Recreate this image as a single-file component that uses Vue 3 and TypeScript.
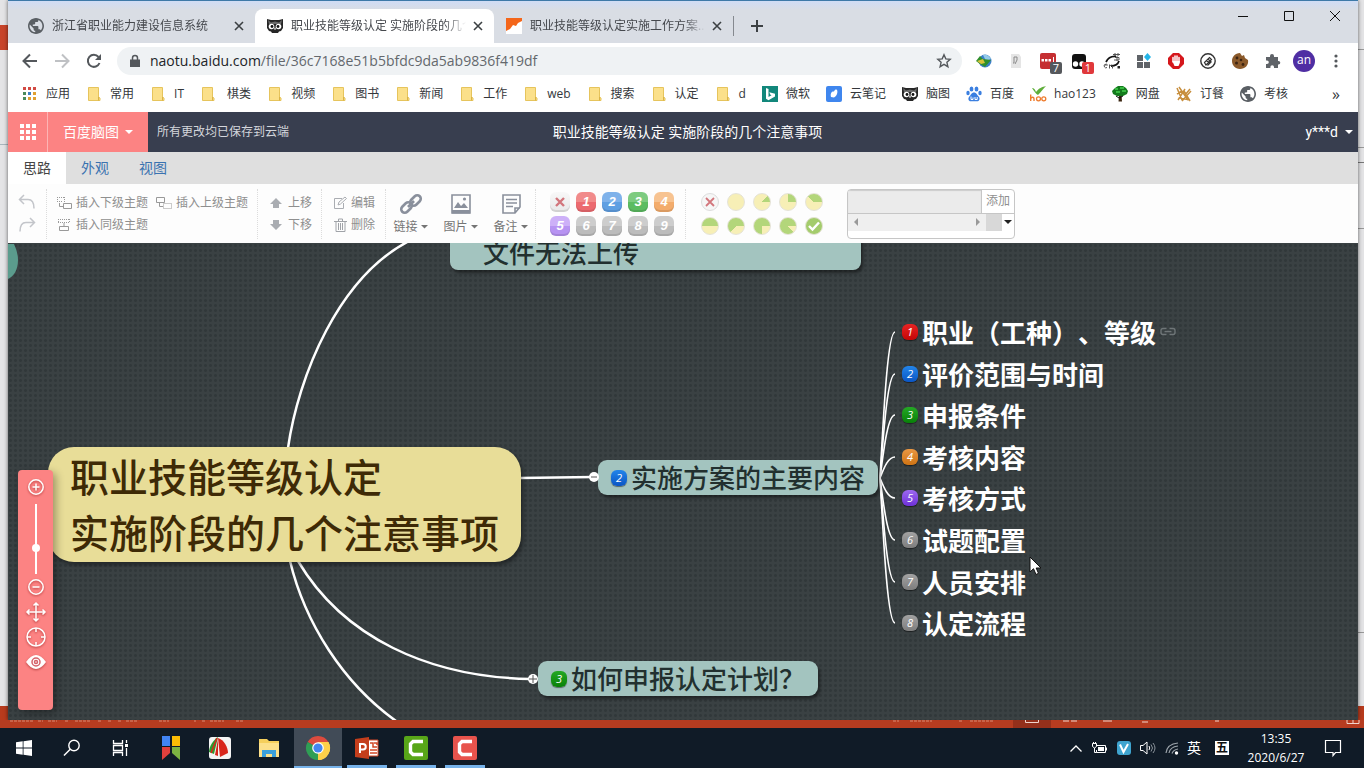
<script setup lang="ts">
import { ref } from 'vue'

interface Tab { title: string; icon: string; active?: boolean }
interface Bookmark { label: string; icon: string }
interface Leaf { n: number; text: string; y: number }

const icons: Record<string, string> = {
  globe: '<path transform="translate(-1.600 -1.600) scale(.8)" d="M12 2C6.480 2 2 6.480 2 12s4.480 10 10 10 10-4.480 10-10S17.520 2 12 2zm-1 17.930c-3.950-.49-7-3.850-7-7.930 0-.62.08-1.210.21-1.790L9 15v1c0 1.100.9 2 2 2v1.930zm6.900-2.540c-.26-.81-1-1.390-1.900-1.390h-1v-3c0-.55-.45-1-1-1H8v-2h2c.55 0 1-.45 1-1V7h2c1.100 0 2-.9 2-2v-.41c2.930 1.190 5 4.060 5 7.410 0 2.080-.8 3.970-2.100 5.390z" fill="#5a5f64"/>',
  owl: '<path d="M0 1l4 1h8l4-1v9l-2 3-2 .5-1 1.500H5L4 13.500 2 13 0 10z" fill="#262626"/><path d="M1 2l3 2.500L8 3.500l4 1L15 2l-1 4H2z" fill="#6a6a6a"/><circle cx="4.500" cy="8.500" r="2.800" fill="#fff"/><circle cx="11.500" cy="8.500" r="2.800" fill="#fff"/><circle cx="5" cy="8.500" r="1.400" fill="#111"/><circle cx="11" cy="8.500" r="1.400" fill="#111"/><path d="M8 9l1 2-1 1-1-1z" fill="#ddd"/>',
  orange: '<path d="M0 0h16v16H0z" fill="#fff"/><path d="M0 0h16v3l-4 2-2 3-3-1-3 4-4 2z" fill="#f4661a"/>',
  apps: '<path fill="#d24a43" d="M1 1h3v3H1zM6 1h3v3H6zM11 1h3v3h-3z"/><path fill="#4b8a5c" d="M1 6h3v3H1z"/><path fill="#3e7fc4" d="M6 6h3v3H6z"/><path fill="#e0a030" d="M11 6h3v3h-3zM6 11h3v3H6zM11 11h3v3h-3z"/><path fill="#4b8a5c" d="M1 11h3v3H1z"/>',
  folder: '<path d="M2.500 1.500h10v9.500l1.500 1v2.500H2.500z" fill="#fbe08a" stroke="#e6c45c"/><path d="M12.500 11v3.500" stroke="#d9b347"/>',
  bing: '<path fill="#12877b" d="M0 0h16v16H0z"/><path d="M4 2l2.500 1v8l3-1.800-1.300-.7-.9-2.200L13 7.700v2.800l-6.500 3.700L4 12.700z" fill="#fff"/>',
  note: '<rect width="16" height="16" rx="2" fill="#3f86ee"/><path d="M5 11c-1-4 1-6 3-5.500C9 3.500 10 3 11 4c1 2 0 6-3 7.500z" fill="#fff"/>',
  paw: '<g fill="#3b7fe0"><ellipse cx="5.500" cy="3" rx="1.900" ry="2.600"/><ellipse cx="10.500" cy="3" rx="1.900" ry="2.600"/><ellipse cx="2" cy="7" rx="1.700" ry="2.300"/><ellipse cx="14" cy="7" rx="1.700" ry="2.300"/><path d="M8 6.500c2.500 0 3 2.500 4.700 4 1.600 1.500 1 4.800-1.500 4.800H4.800c-2.500 0-3.100-3.300-1.500-4.800C5 9 5.500 6.500 8 6.500z"/></g><path d="M5 10.500v3h2v-2M9 11v2.500h2.200V11" fill="none" stroke="#fff"/>',
  hao: '<path d="M2 2c2 0 3 1.500 4 4C9 2 12 1 16 0c-3 3-5 6-8 9C6 8 4 5 2 2z" fill="#5fae3a"/><path d="M.7 8.500V15M.7 12.500C2 10.500 4 11 4 13v2" fill="none" stroke="#ee7b2c" stroke-width="1.400"/><g fill="none" stroke="#ee7b2c" stroke-width="1.300"><circle cx="8.500" cy="12.800" r="2"/><circle cx="13.800" cy="12.800" r="2"/></g>',
  tree: '<path d="M7 8h2.500l.5 7.500H6.500z" fill="#3a2510"/><path d="M3 2l3-2h5l3 2 2 3-1 3-4 2H5L1 8 0 5z" fill="#137a1c"/><path d="M3 3h3M8 2h4M4 6h4M10 5h4" stroke="#44d04c" stroke-width="1.500"/><path d="M4 10l3 2 4-2" stroke="#111" fill="none"/>',
  meal: '<path d="M1 2l5 12M3 1l9 13M8 5l6 10M2 14L9 3M6 15L15 5M1 8l5-3M9 9l5-6M4 12l10 2" stroke="#c78e3d" stroke-width="1.500"/>',
  idm: '<circle cx="9" cy="8" r="6.500" fill="#3c7fc6"/><path d="M7 2c3-1 6 0 8 4l-5 2z" fill="#95cbe9"/><path d="M0 8l4-5 3 3 8 1-6 7-5-3z" fill="#2f8f2c"/><path d="M1 8l4 3 4-1-2-4z" fill="#d8c23a"/>',
  script: '<path d="M3 1h8l2 3v11H3z" fill="#e5e5e5"/><path d="M9 4H6v6H5M9 4v3l-2 4" stroke="#888" fill="none"/>',
  dots: '<rect width="16" height="16" rx="2" fill="#c52f32"/><path d="M1.500 6h2.500v2.500H1.500zM5 6h2.500v2.500H5zM8.500 6H11v2.500H8.500zM13 4h1v6h-1z" fill="#fff"/>',
  tamper: '<rect width="14" height="15" rx="3" y="1" fill="#111"/><circle cx="3.500" cy="11" r="2.700" fill="#fff"/><circle cx="10" cy="11" r="2.700" fill="#fff"/>',
  trans: '<path d="M2 9C4 5 8 3 12 3.500M15 8c-1 3-4 5-8 5" fill="none" stroke="#111" stroke-width="1.800"/><path d="M9 1.500h7M11 0v3M14 0v3M11 4.500h4v2.500h-5M13 3v5M0 12h3.500a1.800 1.800 0 1 0-.5 2.500M5.500 15.500V11.500M5.500 13q2-2 3 0v2.500" stroke="#555" fill="none"/><path d="M13.500 13h2.500v2.500h-2.500z" fill="#222"/>',
  squares: '<path fill="#5f6368" d="M1 2h6v6H1zM1 9h6v6H1zM8 9h6v6H8z"/><path fill="#24b5e8" d="M11.500 0l3.500 4-3.500 4L8 4z"/>',
  adblock: '<path d="M5 0h6l5 5v6l-5 5H5l-5-5V5z" fill="#d5171c"/><path d="M5 9V4.500M7 8V3M9 8V3M11 9V4.500" stroke="#fff" stroke-width="1.500" stroke-linecap="round"/><path d="M4.300 8h7.500v2L10.500 13h-4z" fill="#fff"/>',
  slash: '<circle cx="8" cy="8" r="7.200" fill="#fff" stroke="#333" stroke-width="1.400"/><path d="M4.500 9.500l5-5 2 2-5.500 5.500zM6.500 7.500l3 3M8 6l3 3M9 11l2.500-2.500M7.500 12.500l4-4" stroke="#333" stroke-width="1.200" fill="none"/>',
  cookie: '<path d="M8 0l2 3 2-1 1 3 3 2c1 5-3 9-8 9S0 12 0 8s3-8 8-8z" fill="#8b5a2b"/><g fill="#3d2412"><circle cx="5" cy="5" r="1.400"/><circle cx="9" cy="7" r="1.300"/><circle cx="4.500" cy="10" r="1.500"/><circle cx="11" cy="11.500" r="1.400"/></g>',
  puzzle: '<path d="M2 4h4V3a2 2 0 0 1 4 0v1h4v4h.5a1.800 1.800 0 0 1 0 3.600H14V15h-4v-1a1.800 1.800 0 0 0-3.600 0v1H2v-4h1a1.800 1.800 0 0 0 0-3.600H2z" fill="#5f6368"/>',
}

const tabs: Tab[] = [
  { title: '浙江省职业能力建设信息系统', icon: 'globe' },
  { title: '职业技能等级认定 实施阶段的几个注意事项', icon: 'owl', active: true },
  { title: '职业技能等级认定实施工作方案...', icon: 'orange' },
]

const bookmarks: Bookmark[] = [
  { label: '应用', icon: 'apps' },
  ...['常用', 'IT', '\u00a0棋类', '视频', '图书', '新闻', '工作', 'web', '搜索', '认定', 'd'].map((label) => ({ label, icon: 'folder' })),
  { label: '微软', icon: 'bing' },
  { label: '云笔记', icon: 'note' },
  { label: '脑图', icon: 'owl' },
  { label: '百度', icon: 'paw' },
  { label: 'hao123', icon: 'hao' },
  { label: '网盘', icon: 'tree' },
  { label: '订餐', icon: 'meal' },
  { label: '考核', icon: 'globe' },
]

const extensions: { icon: string; count?: number }[] = [
  { icon: 'idm' }, { icon: 'script' }, { icon: 'dots', count: 7 }, { icon: 'tamper', count: 1 }, { icon: 'trans' },
  { icon: 'squares' }, { icon: 'adblock' }, { icon: 'slash' }, { icon: 'cookie' }, { icon: 'puzzle' },
]

const priorities = [1, 2, 3, 4, 5, 6, 7, 8, 9]
const progress = [0, 1, 2, 3, 4, 5, 6, 7]
const pie = (k: number) => ({
  background: `conic-gradient(from ${90 - 45 * k}deg, #b3d67a 0 ${45 * k}deg, #f7efb6 0)`,
})

const leaves: Leaf[] = ['职业（工种）、等级', '评价范围与时间', '申报条件', '考核内容', '考核方式', '试题配置', '人员安排', '认定流程'].map(
  (text, i) => ({ n: i + 1, text, y: 89 + Math.round(i * 41.6) }),
)
const leafEdge = (y: number) => `M872 235C876 ${Math.round(235 + (y - 235) * 0.5)} 880 ${y} 887 ${y}`
const at = (x: number, y: number) => ({ left: `${x}px`, top: `${y}px` })

const zoom = ref(36)
</script>

<template>
  <div class="desktop">
    <div class="stage">
      <main class="window">
        <header class="tabbar">
          <div v-for="t in tabs" :key="t.title" class="tab" :class="{ active: t.active }">
            <svg class="i16" viewBox="0 0 16 16" v-html="icons[t.icon]" />
            <span class="tab-title">{{ t.title }}</span>
            <button class="tab-close" aria-label="关闭标签页"><svg viewBox="0 0 8 8"><path d="M0 0l8 8M8 0L0 8" stroke="#3c4043" stroke-width="1.600" /></svg></button>
          </div>
          <span class="tab-sep"></span>
          <button class="new-tab" aria-label="新标签页"><svg width="12" height="12" viewBox="0 0 12 12"><path d="M6 0v12M0 6h12" stroke="#3c4043" stroke-width="2" /></svg></button>
          <div class="controls">
            <button aria-label="最小化"><svg width="10" height="10"><path d="M0 5.500h10" stroke="#111" /></svg></button>
            <button aria-label="最大化"><svg width="10" height="10"><path d="M.5.5h9v9h-9z" fill="none" stroke="#111" /></svg></button>
            <button aria-label="关闭"><svg width="10" height="10"><path d="M0 0l10 10M10 0L0 10" stroke="#111" /></svg></button>
          </div>
        </header>

        <div class="navbar">
          <button class="nav" aria-label="后退"><svg width="16" height="16" viewBox="0 0 16 16"><path d="M15 8H2M8 1.500L1.500 8 8 14.500" fill="none" stroke="#54585c" stroke-width="2" /></svg></button>
          <button class="nav" aria-label="前进"><svg width="16" height="16" viewBox="0 0 16 16"><path d="M1 8h13M8 1.500L14.500 8 8 14.500" fill="none" stroke="#bfc1c4" stroke-width="2" /></svg></button>
          <button class="nav" aria-label="刷新"><svg width="16" height="16" viewBox="0 0 16 16"><path d="M13.500 10A6 6 0 1 1 12.500 4" fill="none" stroke="#54585c" stroke-width="2" /><path d="M15 1v6H9z" fill="#54585c" /></svg></button>
          <div class="omnibox">
            <svg class="lock" width="10" height="12" viewBox="0 0 10 12"><path d="M0 4.500h10V12H0z" fill="#54585c" /><path d="M2.500 5V3a2.500 2.500 0 0 1 5 0v2" fill="none" stroke="#54585c" stroke-width="1.500" /></svg>
            <a class="url" href="#"><b>naotu.baidu.com</b>/file/36c7168e51b5bfdc9da5ab9836f419df</a>
            <button class="star" aria-label="收藏"><svg width="16" height="16" viewBox="0 0 16 16"><path d="M8 1.800l1.800 4.100 4.400.4-3.300 3 1 4.400L8 11.400l-3.900 2.300 1-4.400-3.300-3 4.400-.4z" fill="none" stroke="#54585c" stroke-width="1.400" /></svg></button>
          </div>
          <button v-for="e in extensions" :key="e.icon" class="nav" :aria-label="e.icon">
            <svg class="i16" viewBox="0 0 16 16" v-html="icons[e.icon]" />
            <span v-if="e.count" class="count" :class="{ red: e.count === 1 }">{{ e.count }}</span>
          </button>
          <button class="nav"><span class="avatar">an</span></button>
          <button class="nav" aria-label="菜单"><svg width="4" height="14"><g fill="#54585c"><circle cx="2" cy="2" r="1.600" /><circle cx="2" cy="7" r="1.600" /><circle cx="2" cy="12" r="1.600" /></g></svg></button>
        </div>

        <nav class="bookmarks">
          <a v-for="b in bookmarks" :key="b.label" href="#"><svg class="i16" viewBox="0 0 16 16" v-html="icons[b.icon]" />{{ b.label }}</a>
          <button class="more">»</button>
        </nav>

        <div class="apphead">
          <button class="grid-btn" aria-label="应用"><svg width="16" height="16" viewBox="0 0 16 16"><path d="M0 0h4v4H0zM6 0h4v4H6zM12 0h4v4h-4zM0 6h4v4H0zM6 6h4v4H6zM12 6h4v4h-4zM0 12h4v4H0zM6 12h4v4H6zM12 12h4v4h-4z" fill="#fff" /></svg></button>
          <button class="brand">百度脑图<i class="caret"></i></button>
          <span class="saved">所有更改均已保存到云端</span>
          <h1>职业技能等级认定 实施阶段的几个注意事项</h1>
          <button class="user">y***d<i class="caret"></i></button>
        </div>

        <div class="ribbon-tabs">
          <a href="#" class="on">思路</a><a href="#">外观</a><a href="#">视图</a>
        </div>

        <div class="ribbon">
          <div class="group undo">
            <button aria-label="撤销"><svg width="18" height="18" viewBox="0 0 18 18"><path d="M6 2L1.500 6.500 6 11M2 6.500h8c4 0 6 3 6 9" fill="none" stroke="#c3c5ca" stroke-width="1.500" /></svg></button>
            <button aria-label="重做"><svg width="18" height="18" viewBox="0 0 18 18"><path d="M12 2l4.500 4.500L12 11M16 6.500H8c-4 0-6 3-6 9" fill="none" stroke="#c3c5ca" stroke-width="1.500" /></svg></button>
          </div>
          <div class="group insert">
            <button><svg class="i16" viewBox="0 0 16 16"><path d="M1 2.500h8M1 6.500h5M1.500 2v5M8.500 2v5" stroke="#999" stroke-dasharray="1 1" /><path d="M3.500 8v3.500H7M7.500 8.500h8v5h-8z" fill="none" stroke="#999" /></svg>插入下级主题</button>
            <button><svg class="i16" viewBox="0 0 16 16"><path d="M.5 2.500h8v5h-8zM3.500 7.500v4H7" fill="none" stroke="#999" /><path d="M7.500 8.500h8v5h-8z" fill="none" stroke="#999" stroke-dasharray="1 1" /></svg>插入上级主题</button>
            <button><svg class="i16" viewBox="0 0 16 16"><path d="M2 2.500h12M2 5.500h12M2.500 2v4M13.500 2v4" stroke="#999" stroke-dasharray="1 1" /><path d="M3.500 9.500h9v4h-9zM8 6v3.500" fill="none" stroke="#999" /></svg>插入同级主题</button>
          </div>
          <div class="group move">
            <button><svg width="12" height="12" viewBox="0 0 12 12"><path d="M6 1l6 6H9v4H3V7H0z" fill="#aaadb2" /></svg>上移</button>
            <button><svg width="12" height="12" viewBox="0 0 12 12"><path d="M6 11L0 5h3V1h6v4h3z" fill="#aaadb2" /></svg>下移</button>
          </div>
          <div class="group edit">
            <button><svg width="13" height="14" viewBox="0 0 13 14"><path d="M8 2.500H.5v10h9V7M4 9l1-3 6-5 1.500 1.500-6 5.500z" fill="none" stroke="#aaadb2" /></svg>编辑</button>
            <button><svg width="13" height="14" viewBox="0 0 13 14"><path d="M0 3.500h13M4.500 3V1h4v2M2 4v9.500h9V4M4.500 5v7M6.500 5v7M8.500 5v7" fill="none" stroke="#a0a3a8" /></svg>删除</button>
          </div>
          <div class="group big">
            <button><svg width="22" height="22" viewBox="0 0 22 22"><g fill="none" stroke="#8a909c" stroke-width="2.600"><rect x="9.500" y="4" width="12" height="7" rx="3.500" transform="rotate(-45 15.500 7.500)" /><rect x=".5" y="11" width="12" height="7" rx="3.500" transform="rotate(-45 6.500 14.500)" /><path d="M8 14l6-6" /></g></svg><span>链接<i class="caret"></i></span></button>
            <button><svg width="22" height="22" viewBox="0 0 22 22"><path d="M2 2h18v18H2z" fill="none" stroke="#8a909c" stroke-width="1.600" /><path d="M2 17h18v3.500H2zM4 15l4-6 3 4 3-3 4 5z" fill="#8a909c" /><circle cx="14.500" cy="6" r="1.600" fill="#8a909c" /></svg><span>图片<i class="caret"></i></span></button>
            <button><svg width="22" height="22" viewBox="0 0 22 22"><path d="M3 2h17v12l-5 6H3zM15 20v-5h5" fill="none" stroke="#8a909c" stroke-width="1.600" /><path d="M6 6.500h11M6 10h11M6 13.500h7" stroke="#8a909c" stroke-width="1.500" /></svg><span>备注<i class="caret"></i></span></button>
          </div>
          <div class="group prio">
            <button class="pbtn none" aria-label="移除优先级"><svg width="10" height="10" viewBox="0 0 10 10"><path d="M1 1l8 8M9 1L1 9" stroke="#d2767c" stroke-width="2.400" /></svg></button>
            <button v-for="p in priorities" :key="p" class="pbtn" :class="'c' + p">{{ p }}</button>
          </div>
          <div class="group prog">
            <button class="gbtn none" aria-label="移除进度"><svg width="10" height="10" viewBox="0 0 10 10"><path d="M1 1l8 8M9 1L1 9" stroke="#d2767c" stroke-width="1.800" /></svg></button>
            <button v-for="k in progress" :key="k" class="gbtn" :style="pie(k)" :aria-label="'进度 ' + k"></button>
            <button class="gbtn done" aria-label="完成"><svg width="12" height="10" viewBox="0 0 12 10"><path d="M1 5l3.500 3.500L11 1.500" fill="none" stroke="#fff" stroke-width="2.400" /></svg></button>
          </div>
          <div class="resource">
            <div class="res-top"><input type="text" aria-label="资源" /><button>添加</button></div>
            <div class="res-bottom">
              <div class="hscroll"><i class="al"></i><i class="ar"></i></div><span class="corner"></span>
              <button aria-label="展开"><i class="caret"></i></button>
            </div>
          </div>
        </div>

        <section class="canvas">
          <svg class="edges" width="1350" height="477" viewBox="0 0 1350 477">
            <path class="stub" d="M0 1h6q4 8 4 16c0 10-4 16-10 19z" />
            <g class="main">
              <path d="M280 205C290 135 330 32 405 -4" />
              <path d="M512 235L585 234" />
              <path d="M290 318C335 394 420 434 522 436" />
              <path d="M282 318C297 380 335 440 388 478" />
            </g>
            <path v-for="l in leaves" :key="l.n" class="twig" :d="leafEdge(l.y)" />
          </svg>

          <div class="node root" :style="at(40, 204)">职业技能等级认定<br />实施阶段的几个注意事项</div>
          <div class="node branch upload" :style="at(442, -9)">文件无法上传</div>
          <div class="node branch plan" :style="at(590, 217)"><span class="badge b2">2</span>实施方案的主要内容</div>
          <div class="node branch apply" :style="at(530, 418)"><span class="badge b3">3</span>如何申报认定计划？</div>
          <button class="fold" :style="at(581, 229)" aria-label="收起"><svg width="10" height="10"><path d="M2 5h6" stroke="#555" /></svg></button>
          <button class="fold" :style="at(520, 431)" aria-label="展开"><svg width="10" height="10"><path d="M1 5h8M5 1v8" stroke="#555" /></svg></button>

          <div v-for="l in leaves" :key="l.text" class="node leaf" :style="at(894, l.y - 17)">
            <span class="badge" :class="'b' + l.n">{{ l.n }}</span>{{ l.text }}
            <svg v-if="l.n === 1" width="16" height="10" viewBox="0 0 16 10"><path d="M6.500 1.500H3a2 2 0 0 0-2 2v2a2 2 0 0 0 2 2h3.500M9.500 1.500H13a2 2 0 0 1 2 2v2a2 2 0 0 1-2 2H9.500M4.500 4.500h7" fill="none" stroke="#6f7678" stroke-width="1.400" /></svg>
          </div>

          <aside class="dock">
            <button aria-label="放大"><svg width="18" height="18" viewBox="0 0 18 18"><circle cx="9" cy="9" r="7.200" /><path d="M9 5.500v7M5.500 9h7" /></svg></button>
            <input v-model="zoom" type="range" min="0" max="100" aria-label="缩放" />
            <button aria-label="缩小"><svg width="18" height="18" viewBox="0 0 18 18"><circle cx="9" cy="9" r="7.200" /><path d="M5.500 9h7" /></svg></button>
            <button aria-label="拖动"><svg width="20" height="20" viewBox="0 0 20 20"><path d="M10 1v18M1 10h18M7.500 3.500L10 1l2.500 2.500M7.500 16.500L10 19l2.500-2.500M3.500 7.500L1 10l2.500 2.500M16.500 7.500L19 10l-2.500 2.500" /></svg></button>
            <button aria-label="定位"><svg width="20" height="20" viewBox="0 0 20 20"><circle cx="10" cy="10" r="9" /><path d="M10 1v4M10 15v4M1 10h4M15 10h4" /></svg></button>
            <button aria-label="导航"><svg width="20" height="16" viewBox="0 0 20 16"><path d="M0 8q10-14 20 0-10 14-20 0z" fill="#fff" stroke="none" /><circle cx="10" cy="8" r="4" stroke="#d5636b" /><circle cx="10" cy="8" r="1.500" stroke="#d5636b" /></svg></button>
          </aside>

          <svg class="cursor" :style="at(1021, 313)" width="14" height="20" viewBox="0 0 14 20"><path d="M1 1v15l3.500-3.300L7 18.500l2.500-1.200L7.200 12H12z" fill="#fff" stroke="#111" /></svg>
        </section>
      </main>
      <svg class="under" height="8" viewBox="0 0 1364 8" preserveAspectRatio="xMinYMin slice">
        <path d="M1013 0h38v8h-38z" fill="#94301b" />
        <path d="M10 1h24M38 1h5M48 1h9M65 1h3M75 1h15M98 1h4M108 1h3M118 1h4M126 1h12M159 1h10M194 1h2M202 1h4M210 1h14M236 1h8M893 1h6M910 1h22M959 1h3M970 1h24" stroke="#d98a72" stroke-dasharray="3 1" />
        <path d="M1025.500 0v2.500h13V0M1063 1h6M1071 1h6M1103 1h9M1142 2h6M1215 1h4M1347 0v3.500h12V0M1353 0v3" fill="none" stroke="#f1d5cc" />
      </svg>
    </div>

    <footer class="taskbar">
      <button class="sys" aria-label="开始"><svg width="16" height="16" viewBox="0 0 16 16"><path d="M0 2.300l6.700-1v6.300H0zM7.500 1.200L16 0v7.600H7.500zM0 8.400h6.700v6.300L0 13.700zM7.500 8.400H16V16l-8.500-1.200z" fill="#fff" /></svg></button>
      <button class="sys" aria-label="搜索"><svg width="18" height="18" viewBox="0 0 18 18"><circle cx="11" cy="6.500" r="5.200" fill="none" stroke="#fff" stroke-width="1.400" /><path d="M7.200 10.200L1 16.500" stroke="#fff" stroke-width="1.500" /></svg></button>
      <button class="sys" aria-label="任务视图"><svg width="18" height="16" viewBox="0 0 18 16"><path d="M2.500 0v3.500h9V0M2.500 16v-3.500h9V16M2.500 5.500h9v5h-9zM15.500 0v3M15.500 8v8" fill="none" stroke="#fff" stroke-width="1.300" /><path d="M14 4h3v3h-3z" fill="#fff" /></svg></button>
      <button class="app first" aria-label="书签"><svg width="20" height="24" viewBox="0 0 20 24"><path fill="#4285f4" d="M1 0h8v10H1z" /><path fill="#fbbc05" d="M11 0h8v10h-8z" /><path fill="#e2403c" d="M1 11h8v6l-8 7z" /><path fill="#7cb342" d="M11 11h8v13l-8-7z" /></svg></button>
      <button class="app" aria-label="截图"><svg width="22" height="22" viewBox="0 0 22 22"><rect width="22" height="22" rx="3" fill="#f4f4f4" /><path d="M9 0C4 3 0 10 0 15l5 2z" fill="#2c9b2f" /><path d="M9 1c6 2 10 9 10 15l-8 4z" fill="#d8261c" /><path d="M9 2L6 18l3 1z" fill="#d8261c" /><path d="M8 1L2 16" stroke="#d8261c" stroke-width="1.500" /></svg></button>
      <button class="app" aria-label="文件资源管理器"><svg width="22" height="20" viewBox="0 0 22 20"><path d="M1 1h8l2 2h10v16H1z" fill="#f5cf5c" /><path d="M1 5h20v14H1z" fill="#fce08a" /><path d="M4 19v-7h14v7h-4v-3H8v3z" fill="#3aa0dc" /></svg></button>
      <button class="app running current" aria-label="Chrome"><svg width="24" height="24" viewBox="0 0 24 24"><path d="M12 12L1.600 6A12 12 0 0 1 22.400 6z" fill="#dd4b3e" /><path d="M12 12L22.400 6A12 12 0 0 1 12 24z" fill="#fdd04a" /><path d="M12 12v12A12 12 0 0 1 1.600 6z" fill="#2f9e55" /><path d="M12 6h10.400A12 12 0 0 1 12 24l5-9z" fill="#fdd04a" /><circle cx="12" cy="12" r="5.800" fill="#fff" /><circle cx="12" cy="12" r="4.600" fill="#4486f0" /></svg></button>
      <button class="app running" aria-label="PowerPoint"><svg width="24" height="22" viewBox="0 0 24 22"><path d="M12 3h11v16H12z" fill="#fff" stroke="#d24726" /><path d="M15 6h3v4h4M15 13h7M15 16h7M19 6h3v2" stroke="#d24726" stroke-width="1.500" fill="none" /><path d="M0 2l14-2v22L0 20z" fill="#c43e1c" /><path d="M5 16V7h3a2.500 2.500 0 0 1 0 5.500H5" fill="none" stroke="#fff" stroke-width="2" /></svg></button>
      <button class="app running" aria-label="Camtasia"><svg width="24" height="24" viewBox="0 0 24 24"><rect width="24" height="24" rx="2" fill="#58a618" /><path d="M19 5.500H9L6.500 8v8L9 18.500h10" fill="none" stroke="#fff" stroke-width="3.400" /></svg></button>
      <button class="app running" aria-label="Camtasia 录制"><svg width="24" height="24" viewBox="0 0 24 24"><rect width="24" height="24" rx="2" fill="#e8534c" /><path d="M19 5.500H9L6.500 8v8L9 18.500h10" fill="none" stroke="#fff" stroke-width="3.400" /></svg></button>

      <div class="tray">
        <button aria-label="显示隐藏的图标"><svg width="12" height="7" viewBox="0 0 12 7"><path d="M.5 6.500L6 1l5.500 5.500" fill="none" stroke="#fff" stroke-width="1.300" /></svg></button>
        <button aria-label="电源"><svg width="16" height="12" viewBox="0 0 16 12"><path d="M4.500 3.500h9v7h-9V8M14.500 5.500v3M.5 1.500h4v3l-2 1.500-2-1.500zM1.500 0v1.500M3.500 0v1.500M2.500 6v4.500h2" fill="none" stroke="#fff" /><path d="M6 5h6v4H6z" fill="#fff" /></svg></button>
        <button aria-label="V"><svg width="14" height="14" viewBox="0 0 14 14"><rect width="14" height="14" rx="3" fill="#3fa4cf" /><path d="M3 3.500L6.500 11 11 3" fill="none" stroke="#fff" stroke-width="2" /></svg></button>
        <button aria-label="音量"><svg width="16" height="14" viewBox="0 0 16 14"><path d="M.5 4.500H3l4-3.500v12L3 9.500H.5z" fill="none" stroke="#fff" /><path d="M9 5q1.500 2 0 4" fill="none" stroke="#fff" /><path d="M11 3.500q3 3.500 0 7M13 2q4 5 0 10" fill="none" stroke="#8b939b" /></svg></button>
        <button aria-label="网络"><svg width="14" height="14" viewBox="0 0 14 14"><path d="M1 12Q2 3 13 2M4 12q1-6 9-7M7 12.500Q8 9 13 8" fill="none" stroke="#9ba3aa" stroke-width="1.200" /><circle cx="11.500" cy="12" r="1.700" fill="#fff" /></svg></button>
        <button class="ime">英</button>
        <button class="wubi"><span>五</span></button>
        <button class="clock">13:35<br />2020/6/27</button>
        <button class="notify" aria-label="通知"><svg width="16" height="16" viewBox="0 0 16 16"><path d="M.5.500h15v12h-5l-2.500 3v-3H.5z" fill="none" stroke="#fff" stroke-width="1.200" /></svg></button>
      </div>
    </footer>
  </div>
</template>

<style>
html, body { margin: 0; overflow: hidden; }
</style>

<style scoped>
.desktop {
  height: 100vh;
  display: flex;
  flex-direction: column;
  font: 12px/16px "Open Sans", "Noto Sans CJK SC", sans-serif;
  color: #333;
}
.desktop * { box-sizing: border-box; }
button {
  border: 0; padding: 0; background: none; font: inherit; color: inherit;
  display: flex; align-items: center; justify-content: center; flex: none;
}
a { color: inherit; text-decoration: none; }
svg { display: block; flex: none; overflow: visible; }
.i16 { width: 16px; height: 16px; }
.caret {
  display: inline-block; width: 8px; height: 4px; background: currentColor;
  clip-path: polygon(0 0, 100% 0, 50% 100%);
}

.stage {
  flex: 1; min-height: 0; display: flex; flex-direction: column;
  background:
    linear-gradient(#b83b1d, #b83b1d) 0 100% / 100% 22px no-repeat,
    linear-gradient(#c8442a, #c8442a) 0 25px / 8px 25px no-repeat,
    linear-gradient(#a9b6bd, #a9b6bd) 0 144px / 8px 1px no-repeat,
    linear-gradient(#999, #999) 100% 49px / 6px 1px no-repeat,
    linear-gradient(#999, #999) 100% 147px / 6px 1px no-repeat,
    linear-gradient(#777, #777) 100% 162px / 6px 1px no-repeat,
    linear-gradient(#999, #999) 100% 228px / 6px 1px no-repeat,
    linear-gradient(#999, #999) 100% 632px / 6px 1px no-repeat,
    #e4e4e6;
}
.window {
  flex: 1; min-height: 0; margin: 0 6px 0 8px; display: flex; flex-direction: column;
  border-top: 1px solid #3d79a8; background: #fff; box-shadow: 0 0 4px #0009;
}
.under { width: 100%; position: relative; background: #b63c20; }

.tabbar { height: 42px; flex: none; display: flex; padding: 8px 0 0 8px; background: linear-gradient(#cfdcf5, #d9dde4 9px); }
.tab { width: 239px; height: 34px; display: flex; align-items: center; gap: 8px; padding: 0 12px; color: #45484d; }
.tab.active { background: #fff; border-radius: 8px 8px 0 0; }
.tab-title { flex: 1; overflow: hidden; white-space: nowrap; mask-image: linear-gradient(90deg, #000 88%, transparent); }
.tab-close { width: 8px; height: 8px; }
.tab-close svg { width: 8px; height: 8px; }
.tab-sep { width: 1px; height: 20px; margin: 7px 0; background: #85898f; }
.new-tab { width: 46px; height: 34px; }
.controls { margin: -8px 0 0 auto; display: flex; height: 30px; }
.controls button { width: 46px; }

.navbar { height: 36px; flex: none; display: flex; align-items: center; padding: 0 6px; }
.nav { width: 32px; height: 32px; position: relative; }
.omnibox { flex: 1; height: 28px; margin: 0 6px 0 7px; padding: 0 6px 0 13px; border-radius: 14px; background: #eff2f4; display: flex; align-items: center; }
.url { flex: 1; margin-left: 10px; font-size: 14px; line-height: 20px; color: #64686d; }
.url b { font-weight: 400; color: #222428; }
.star { width: 24px; height: 24px; }
.count { position: absolute; left: 18px; top: 17px; width: 12px; height: 12px; border-radius: 2px; background: #55585c; color: #fff; font-size: 11px; line-height: 12px; text-align: center; }
.count.red { background: #e0383b; }
.avatar { width: 22px; height: 22px; border-radius: 50%; background: #4f2ea3; color: #fff; line-height: 20px; }

.bookmarks { height: 33px; flex: none; display: flex; align-items: center; gap: 16px; padding: 0 18px 4px 14px; color: #34373b; white-space: nowrap; }
.bookmarks a { display: flex; align-items: center; gap: 8px; }
.more { margin-left: auto; font-size: 16px; }

.apphead { height: 40px; flex: none; display: flex; align-items: center; background: #383e4f; color: #fff; font-size: 14px; }
.grid-btn { width: 40px; height: 40px; background: #fc8383; border-right: 1px solid #fdb4b4; }
.brand { width: 100px; height: 40px; background: #fc8383; gap: 6px; }
.saved { flex: 1 1 0; padding-left: 9px; font-size: 12px; color: #d4d6dc; }
.apphead h1 { margin: 0; font-size: 14px; font-weight: 400; }
.user { flex: 1 1 140px; justify-content: flex-end; gap: 7px; padding-right: 5px; font-family: Roboto, sans-serif; }

.ribbon-tabs { height: 32px; flex: none; display: flex; background: #dfdfdf; font-size: 14px; line-height: 32px; color: #3a72b0; }
.ribbon-tabs a { padding: 0 15px; }
.ribbon-tabs .on { background: #fff; color: #444; }

.ribbon { height: 59px; flex: none; display: flex; align-items: center; background: #fdfdfd; color: #8f8f8f; }
.group { height: 50px; border-right: 1px dotted #dcdcdc; }
.undo { width: 39px; display: grid; align-content: center; justify-content: center; gap: 5px; }
.insert { width: 211px; display: grid; grid-template-columns: 100px 100px; grid-auto-rows: 22px; align-content: center; padding-left: 9px; }
.insert button { justify-content: flex-start; gap: 4px; }
.move, .edit { width: 64px; display: grid; grid-auto-rows: 22px; align-content: center; padding-left: 12px; }
.move button, .edit button { justify-content: flex-start; gap: 6px; }
.edit button { gap: 4px; }
.big { width: 150px; display: flex; }
.big button { width: 50px; flex-direction: column; gap: 4px; color: #757575; }
.big span { display: flex; align-items: center; gap: 3px; }
.prio, .prog { width: 150px; display: grid; grid-template-columns: repeat(5, 26px); grid-auto-rows: 24px; align-content: center; padding-left: 11px; align-items: center; justify-items: center; }
.pbtn { width: 20px; height: 20px; border-radius: 6px; color: #fff; font: italic 700 13px/20px "Liberation Sans", sans-serif; background: linear-gradient(#cdcdcd 50%, #bcbcbc 50%); box-shadow: inset 0 -2px #0000001a; }
.pbtn.none { background: linear-gradient(#f8f8f8, #e8e8e8); }
.c1 { background: linear-gradient(#f18b8b 50%, #ec6a70 50%); }
.c2 { background: linear-gradient(#7fb2ea 50%, #5f9fe2 50%); }
.c3 { background: linear-gradient(#7dcb80 50%, #5cbc61 50%); }
.c4 { background: linear-gradient(#f7c391 50%, #f3ac6c 50%); }
.c5 { background: linear-gradient(#cdb0f8 50%, #b793f2 50%); }
.prog { border: 0; }
.gbtn { width: 18px; height: 18px; border-radius: 50%; border: 1px solid #e5e3d6; background-origin: border-box; }
.gbtn.none { background: #f6f6f6; border-color: #ddd; }
.gbtn.done { background: #a4cc6c; }
.resource { width: 168px; height: 50px; margin-left: 11px; border: 1px solid #c6c6c6; border-radius: 4px; background: #fff; overflow: hidden; }
.res-top { display: flex; height: 24px; border-bottom: 1px solid #c6c6c6; }
.res-top input { flex: 1; min-width: 0; border: 0; border-right: 1px solid #c6c6c6; background: #ebebeb; box-shadow: inset 0 1px 1px #0002; padding: 0 6px; font: inherit; }
.res-top button { width: 32px; }
.res-bottom { display: flex; height: 17px; }
.hscroll { flex: 1; display: flex; align-items: center; justify-content: space-between; padding: 0 6px; background: #efefef; }
.al, .ar { width: 4px; height: 8px; background: #999; clip-path: polygon(100% 0, 100% 100%, 0 50%); }
.ar { clip-path: polygon(0 0, 100% 50%, 0 100%); }
.corner { width: 16px; background: #d8d8d8; }
.res-bottom button { width: 12px; color: #222; }

.canvas {
  flex: 1; min-height: 0; position: relative; overflow: hidden;
  background:
    radial-gradient(circle, #31383a 1px, transparent 2px) 0 0 / 5px 5px,
    #3a4143;
}
.edges { position: absolute; left: 0; top: 0; fill: none; stroke: #fff; }
.stub { fill: #5b9c8d; stroke: none; }
.main { stroke-width: 2.500; }
.twig { stroke-width: 1.600; }
.node { position: absolute; white-space: nowrap; font-family: "Noto Sans CJK SC", sans-serif; text-spacing-trim: space-all; }
.root { padding: 0 22px 3px; border-radius: 26px; background: #e8dd98; color: #3e2a06; font-size: 39px; line-height: 56px; font-weight: 500; box-shadow: 2px 3px 4px #0006; }
.branch { height: 35px; display: flex; align-items: center; gap: 4px; border-radius: 9px; background: #a3c4bf; color: #22302f; font-size: 26px; line-height: 32px; font-weight: 500; box-shadow: 2px 3px 3px #0006; padding: 0 13px 2px; }
.branch .badge { margin-top: 2px; }
.upload { width: 411px; height: 36px; padding: 0 33px; border-radius: 8px; }
.apply { width: 280px; }
.leaf { display: flex; align-items: center; gap: 4px; color: #fff; font-size: 26px; line-height: 34px; font-weight: 700; }
.badge { width: 16px; height: 16px; border-radius: 6px; color: #fff; font: italic 11px/16px "Open Sans", sans-serif; text-align: center; background: linear-gradient(#a2a2a2, #7d7d7d); box-shadow: 0 1px 1px #0007; }
.b1 { background: linear-gradient(#e82323, #c40606); }
.b2 { background: linear-gradient(#2285ea, #0a55c4); }
.b3 { background: linear-gradient(#25a825, #088008); }
.b4 { background: linear-gradient(#ea9743, #cf7414); }
.b5 { background: linear-gradient(#9c68ef, #6e30d8); }
.fold { position: absolute; width: 10px; height: 10px; border-radius: 50%; background: #fff; }
.dock { position: absolute; left: 10px; top: 227px; width: 35px; height: 240px; padding-top: 7px; display: flex; flex-direction: column; align-items: center; border-radius: 4px; background: #fc8383; box-shadow: 3px 3px 8px #0005; }
.dock button { height: 25px; min-height: 25px; }
.dock button:first-child { height: 20px; min-height: 20px; }
.dock svg { fill: none; stroke: #fff; stroke-width: 1.500; filter: drop-shadow(0 1px 1px #a33c); }
.dock input { appearance: none; writing-mode: vertical-lr; direction: rtl; width: 10px; height: 70px; margin: 7px 0 0; background: linear-gradient(#fff, #fff) center / 2px 100% no-repeat; }
.dock input::-webkit-slider-thumb { appearance: none; width: 8px; height: 8px; border-radius: 50%; background: #fff; }
.cursor { position: absolute; }

.taskbar { height: 40px; flex: none; display: flex; background: #101b27; color: #fff; }
.sys { width: 48px; }
.app { width: 48px; margin-right: 1px; }
.first { margin-left: 3px; }
.running { background: linear-gradient(#76b2ea, #76b2ea) 50% 100% / 40px 3px no-repeat; }
.current { background: linear-gradient(#76b2ea, #76b2ea) 50% 100% / 100% 2px no-repeat, #414b57; }
.tray { margin-left: auto; display: flex; }
.tray button { width: 24px; }
.tray .ime { width: 20px; font-size: 14px; }
.tray .wubi { width: 36px; }
.wubi span { width: 14px; height: 14px; background: #fff; color: #111; line-height: 14px; font-weight: 700; }
.tray .clock { width: 72px; line-height: 19px; }
.tray .notify { width: 42px; margin-right: 10px; }
</style>
